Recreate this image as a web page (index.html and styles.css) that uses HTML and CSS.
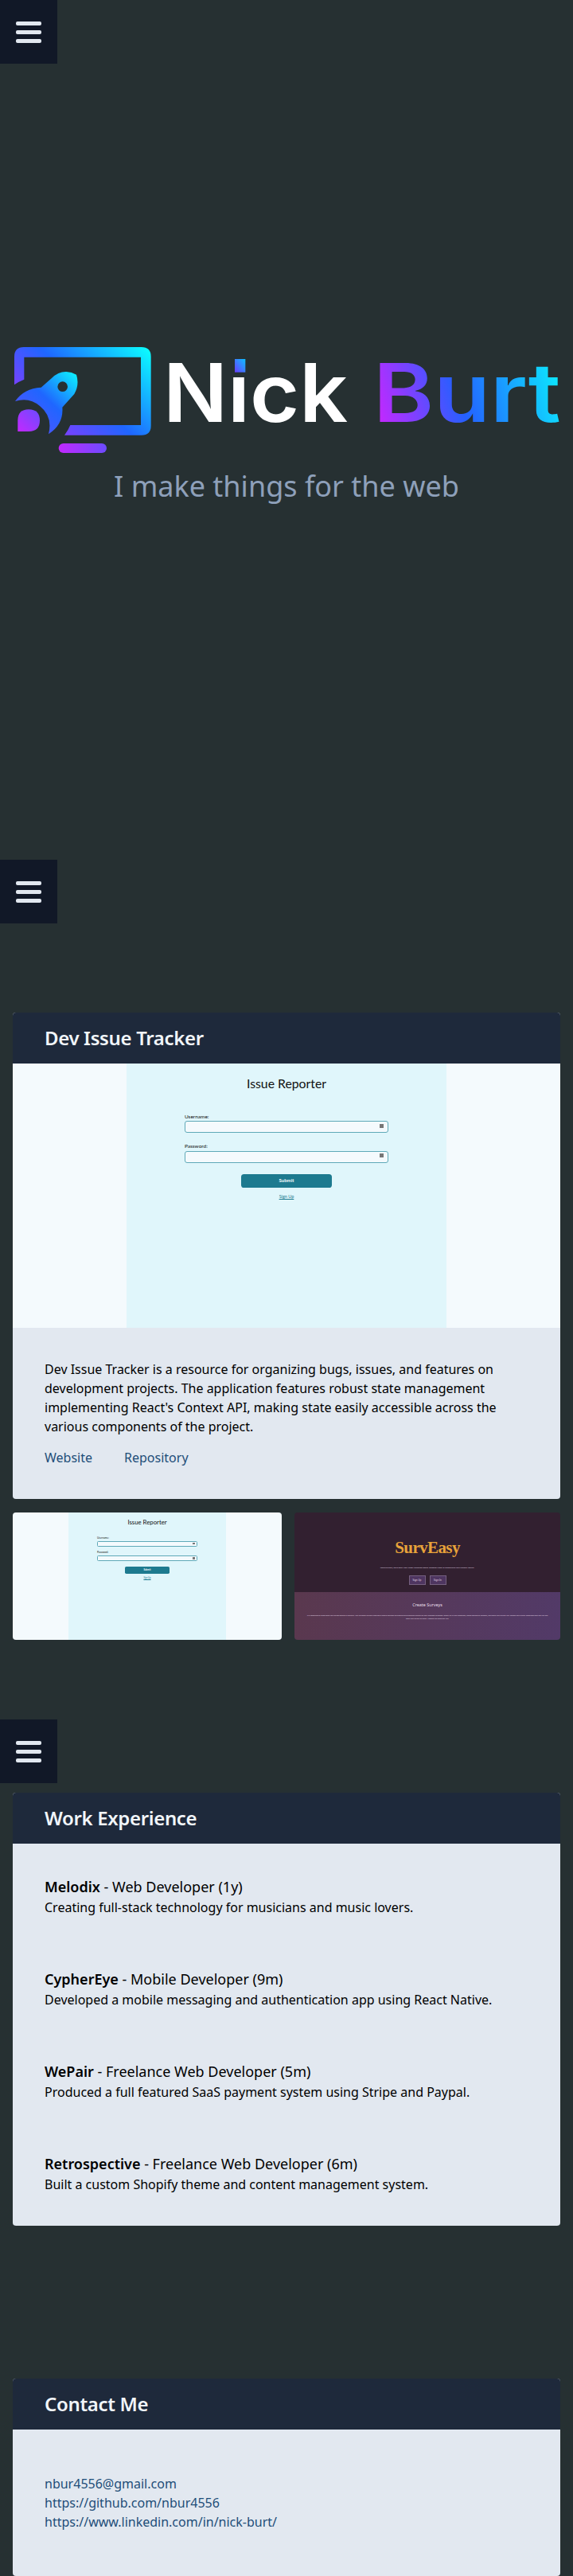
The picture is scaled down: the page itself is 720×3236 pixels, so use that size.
FILE: index.html
```html
<!DOCTYPE html>
<html lang="en">
<head>
<meta charset="utf-8">
<title>Nick Burt</title>
<link rel="stylesheet" href="styles.css">
</head>
<body>
<section class="hero">
  <button class="menu" aria-label="Menu"><span></span><span></span><span></span></button>
  <svg class="logo" viewBox="0 0 2160 480" role="img" aria-label="Nick Burt">
    <defs>
      <linearGradient id="gFrame" gradientUnits="userSpaceOnUse" x1="150" y1="420" x2="520" y2="30">
        <stop offset="0" stop-color="#a82dff"/><stop offset=".5" stop-color="#1f66ff"/><stop offset="1" stop-color="#0cf8ff"/>
      </linearGradient>
      <linearGradient id="gRocket" gradientUnits="userSpaceOnUse" x1="90" y1="360" x2="290" y2="150">
        <stop offset="0" stop-color="#5a50ff"/><stop offset=".5" stop-color="#1f66ff"/><stop offset="1" stop-color="#0cf0ff"/>
      </linearGradient>
      <linearGradient id="gFlame" gradientUnits="userSpaceOnUse" x1="67" y1="366" x2="150" y2="283">
        <stop offset="0" stop-color="#c328ff"/><stop offset="1" stop-color="#6a4cff"/>
      </linearGradient>
      <linearGradient id="gStand" gradientUnits="userSpaceOnUse" x1="221" y1="447" x2="402" y2="411">
        <stop offset="0" stop-color="#c328ff"/><stop offset="1" stop-color="#6a4cff"/>
      </linearGradient>
      <linearGradient id="gBurt" gradientUnits="userSpaceOnUse" x1="1431" y1="330" x2="2106" y2="130">
        <stop offset="0" stop-color="#c328ff"/><stop offset=".45" stop-color="#2460ff"/><stop offset="1" stop-color="#0ceaff"/>
      </linearGradient>
      <linearGradient id="gDot" x1="0" y1="1" x2="1" y2="0">
        <stop offset="0" stop-color="#6a3cff"/><stop offset="1" stop-color="#0cc0ff"/>
      </linearGradient>
    </defs>
    <path class="fr" d="M54 190V84Q54 48 90 48H533Q569 48 569 84V344Q569 380 533 380H243Q257 362 265 342H531V86H91V170Q70 178 54 190Z"/>
    <path class="rk" fill-rule="evenodd" d="M57 252Q90 204 155 200L195 165Q220 140 250 141Q270 142 288 152Q300 190 280 225L235 275Q240 340 183 376Q200 310 150 270Q110 235 57 252ZM236 178A19 19 0 1 0 236 216A19 19 0 1 0 236 178Z"/>
    <path class="fl" d="M67 366V325Q67 283 108 283Q150 283 150 325Q150 366 108 366Z"/>
    <rect class="st" x="221" y="411" width="181" height="36" rx="18"/>
    <text class="lt ln" x="615" y="330" textLength="696" lengthAdjust="spacingAndGlyphs">Nick</text>
    <rect class="dot-mask" x="872" y="78" width="66" height="76"/>
    <rect class="dot" x="885" y="93" width="40" height="50"/>
    <text class="lt lb" x="1407" y="330" textLength="707" lengthAdjust="spacingAndGlyphs">Burt</text>
  </svg>
  <p class="tagline">I make things for the web</p>
</section>

<section class="projects">
  <button class="menu" aria-label="Menu"><span></span><span></span><span></span></button>
  <article class="card project">
    <h2 class="card-title">Dev Issue Tracker</h2>
    <div class="shot shot-main">
      <div class="shot-col">
        <div class="s-title">Issue Reporter</div>
        <div class="s-label s-first">Username:</div>
        <div class="s-input"><i></i></div>
        <div class="s-label s-second">Password:</div>
        <div class="s-input"><i></i></div>
        <div class="s-btn">Submit</div>
        <div class="s-link">Sign Up</div>
      </div>
    </div>
    <div class="card-body">
      <p class="desc">Dev Issue Tracker is a resource for organizing bugs, issues, and features on development projects. The application features robust state management implementing React's Context API, making state easily accessible across the various components of the project.</p>
      <div class="links"><a href="#">Website</a><a href="#">Repository</a></div>
    </div>
  </article>
  <div class="thumbs">
    <div class="shot shot-thumb">
      <div class="shot-col">
        <div class="s-title">Issue Reporter</div>
        <div class="s-label s-first">Username:</div>
        <div class="s-input"><i></i></div>
        <div class="s-label s-second">Password:</div>
        <div class="s-input"><i></i></div>
        <div class="s-btn">Submit</div>
        <div class="s-link">Sign Up</div>
      </div>
    </div>
    <div class="surv">
      <div class="surv-top">
        <div class="surv-title">SurvEasy</div>
        <div class="surv-sub">Make surveys, learn what your target audience needs. Remodel them to understand your product results.</div>
        <div class="surv-btns"><span>Sign Up</span><span>Sign In</span></div>
      </div>
      <div class="surv-bottom">
        <div class="surv-h">Create Surveys</div>
        <div class="surv-p">It is important to know what your target market is thinking. Your SurvEasy Surveys provides a simple solution to creating and providing surveys to your intended audience. Simply fill in your questions, create options as answers, and share your survey link. Review your survey responses with the link and keep your survey on hand. Answers are saved for you.</div>
      </div>
    </div>
  </div>
</section>

<section class="info">
  <button class="menu" aria-label="Menu"><span></span><span></span><span></span></button>
  <article class="card work">
    <h2 class="card-title">Work Experience</h2>
    <div class="card-body jobs">
      <div class="job"><h3><b>Melodix</b> - Web Developer (1y)</h3><p>Creating full-stack technology for musicians and music lovers.</p></div>
      <div class="job"><h3><b>CypherEye</b> - Mobile Developer (9m)</h3><p>Developed a mobile messaging and authentication app using React Native.</p></div>
      <div class="job"><h3><b>WePair</b> - Freelance Web Developer (5m)</h3><p>Produced a full featured SaaS payment system using Stripe and Paypal.</p></div>
      <div class="job"><h3><b>Retrospective</b> - Freelance Web Developer (6m)</h3><p>Built a custom Shopify theme and content management system.</p></div>
    </div>
  </article>
  <article class="card contact">
    <h2 class="card-title">Contact Me</h2>
    <div class="card-body contact-body">
      <a href="#">nbur4556@gmail.com</a>
      <a href="#">https://github.com/nbur4556</a>
      <a href="#">https://www.linkedin.com/in/nick-burt/</a>
    </div>
  </article>
</section>
</body>
</html>
```
FILE: styles.css
```css
* { box-sizing: border-box; }
html, body { margin: 0; padding: 0; }
body {
  background: #263032;
  font-family: "Noto Sans", "Open Sans", sans-serif;
  font-size: 16px;
  line-height: 24px;
  color: #000;
}
h2, h3, p { margin: 0; }
a { color: #1e4e79; text-decoration: none; }

.menu {
  display: flex;
  flex-direction: column;
  justify-content: center;
  gap: 6px;
  width: 72px;
  height: 80px;
  padding: 0 20px;
  border: 0;
  background: #111827;
}
.menu span {
  display: block;
  width: 32px;
  height: 5px;
  border-radius: 2px;
  background: #e2e8f0;
}

.hero { height: 1080px; }
.logo { display: block; width: 720px; height: 160px; margin-top: 340px; }
.fr { fill: url(#gFrame); }
.rk { fill: url(#gRocket); }
.fl { fill: url(#gFlame); }
.st { fill: url(#gStand); }
.dot { fill: url(#gDot); }
.dot-mask { fill: #263032; }
.lt { font-family: Inter, sans-serif; font-weight: 600; font-size: 306px; }
.ln { fill: #fff; }
.lb { fill: url(#gBurt); }
.tagline {
  margin-top: 4px;
  text-align: center;
  font-size: 36px;
  line-height: 54px;
  color: #8ea0ba;
}

.projects { height: 1080px; }
.project { margin-top: 112px; }
.card {
  margin-left: 16px;
  margin-right: 16px;
  border-radius: 4px;
  overflow: hidden;
  background: #e2e8f0;
}
.card-title {
  height: 64px;
  padding: 0 40px;
  background: #1e293b;
  color: #f1f5f9;
  font-size: 24px;
  line-height: 64px;
  font-weight: 600;
  letter-spacing: -0.35px;
}
.card-body { padding: 40px; }
.desc { margin-bottom: 15px; }
.links { display: flex; gap: 40px; }

.shot {
  display: flex;
  justify-content: center;
  background: #f4fafd;
  color: #111;
  font-family: Lato, sans-serif;
}
.shot-main { height: 332px; font-size: 10px; }
.shot-thumb { height: 160px; width: 338px; font-size: 4.92px; border-radius: 4px; overflow: hidden; }
.shot-col {
  display: flex;
  flex-direction: column;
  align-items: center;
  width: 40.2em;
  background: #e0f6fb;
}
.s-title { font-size: 1.58em; line-height: 1.63em; height: 1.63em; margin-top: .76em; }
.s-label { font-size: .65em; width: 39.4em; line-height: 1.2em; height: 1.2em; }
.s-first { margin-top: 3.9em; }
.s-second { margin-top: 2em; }
.s-input {
  position: relative;
  width: 25.6em;
  height: 1.5em;
  margin-top: .15em;
  border: .1em solid #5fa9b8;
  border-radius: .3em;
  background: #f4fafd;
}
.s-input i {
  position: absolute;
  right: .5em;
  top: .25em;
  width: .5em;
  height: .5em;
  background: #777;
}
.s-btn {
  width: 19em;
  height: 2.83em;
  margin-top: 2.33em;
  border-radius: .6em;
  background: #1d7a8f;
  color: #f4fafd;
  font-size: .6em;
  line-height: 2.83em;
  text-align: center;
  font-weight: 700;
}
.s-link {
  margin-top: 1.58em;
  font-size: .55em;
  line-height: 1.2em;
  color: #1d7a8f;
  text-decoration: underline;
}

.thumbs {
  display: flex;
  gap: 16px;
  margin: 17px 16px 0;
}
.surv {
  display: flex;
  flex-direction: column;
  width: 334px;
  height: 160px;
  border-radius: 4px;
  overflow: hidden;
  color: #e6dfe8;
  text-align: center;
}
.surv-top { height: 100px; background: #322030; padding-top: 28px; }
.surv-title {
  font-family: "Liberation Serif", serif;
  font-weight: 700;
  font-size: 21px;
  line-height: 32px;
  letter-spacing: -.6px;
  color: #e8a33a;
}
.surv-sub { font-size: 2.4px; line-height: 4px; margin-top: 7px; }
.surv-btns { display: flex; justify-content: center; gap: 5px; margin-top: 8px; }
.surv-btns span {
  width: 21px;
  height: 12px;
  border: 1px solid #75607f;
  background: #4e3560;
  font-size: 3px;
  line-height: 10px;
}
.surv-bottom {
  flex: 1;
  padding: 11px 15px 0;
  background: linear-gradient(100deg, #5a384e, #523a68);
}
.surv-h { font-size: 5.4px; line-height: 10px; }
.surv-p { font-size: 2.15px; line-height: 4.4px; margin-top: 7px; }

.work { margin-top: 12px; }
.jobs { display: flex; flex-direction: column; gap: 64px; }
.job h3 { font-size: 18px; line-height: 28px; font-weight: 400; }
.job b { font-weight: 600; }
.contact { margin-top: 192px; }
.contact-body { display: flex; flex-direction: column; padding: 56px 40px; }
```
